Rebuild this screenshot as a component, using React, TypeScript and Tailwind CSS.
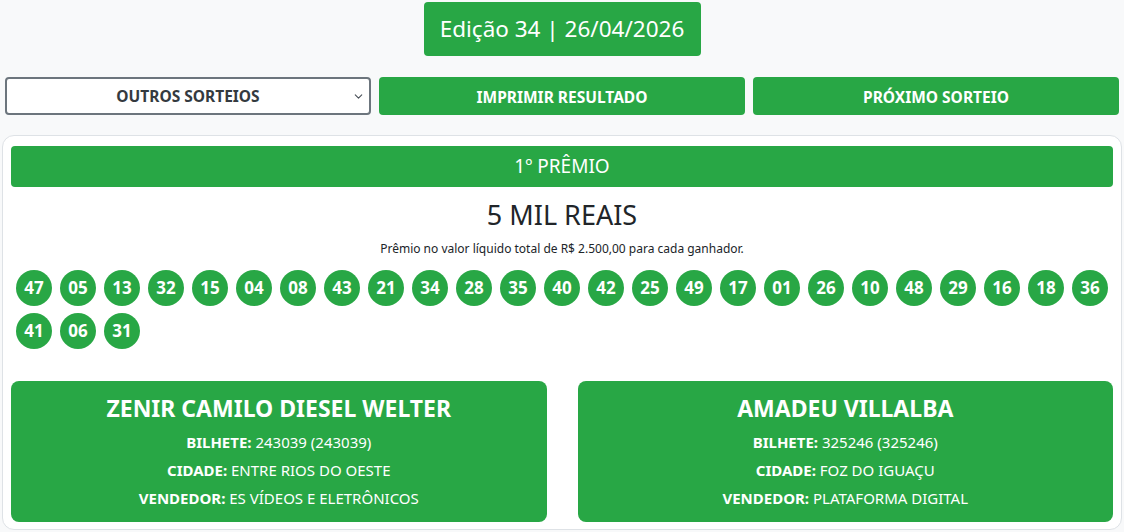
import { ChevronDown } from "lucide-react";

const numbers = [
  "47", "05", "13", "32", "15", "04", "08", "43", "21", "34", "28", "35", "40",
  "42", "25", "49", "17", "01", "26", "10", "48", "29", "16", "18", "36", "41",
  "06", "31",
];

const winners = [
  {
    name: "ZENIR CAMILO DIESEL WELTER",
    bilhete: "243039 (243039)",
    cidade: "ENTRE RIOS DO OESTE",
    vendedor: "ES VÍDEOS E ELETRÔNICOS",
  },
  {
    name: "AMADEU VILLALBA",
    bilhete: "325246 (325246)",
    cidade: "FOZ DO IGUAÇU",
    vendedor: "PLATAFORMA DIGITAL",
  },
];

export default function App() {
  return (
    <div
      className="min-h-[532px] bg-[#f8f9fa] text-[#212529]"
      style={{ fontFamily: '"Noto Sans", "Open Sans", sans-serif' }}
    >
      <div className="flex justify-center pt-[2px]">
        <div className="flex h-[54px] w-[277px] items-center justify-center rounded bg-[#28a745] text-[22.5px] text-white">
          Edição 34 | 26/04/2026
        </div>
      </div>

      <div className="mt-[21px] grid grid-cols-3 gap-2 px-[5px]">
        <div className="relative flex h-[38px] items-center justify-center rounded border-2 border-[#6c757d] bg-white pt-[2px] text-[15.5px] font-bold text-[#343a40]">
          OUTROS SORTEIOS
          <ChevronDown className="absolute right-[4px] top-[11px] h-[13px] w-[13px] text-[#495057]" strokeWidth={2} />
        </div>
        <button className="h-[38px] rounded bg-[#28a745] pt-[3px] text-[15.5px] font-bold text-white">
          IMPRIMIR RESULTADO
        </button>
        <button className="h-[38px] rounded bg-[#28a745] pt-[3px] text-[15.5px] font-bold text-white">
          PRÓXIMO SORTEIO
        </button>
      </div>

      <div className="mx-[2px] mt-[20px] rounded-xl border border-[#dee2e6] bg-white px-2 pb-[7px] pt-[10px]">
        <div className="flex h-[41px] items-center justify-center rounded bg-[#28a745] text-[19px] text-white">
          1º PRÊMIO
        </div>
        <div className="mt-[10px] text-center text-[27px] leading-[36px]">5 MIL REAIS</div>
        <div className="mt-[7px] text-center text-[12px] leading-[18px]">
          Prêmio no valor líquido total de R$ 2.500,00 para cada ganhador.
        </div>
        <div className="mt-[12px] flex flex-wrap gap-x-2 gap-y-[7px] px-[5px]">
          {numbers.map((n) => (
            <div
              key={n}
              className="flex h-9 w-9 items-center justify-center rounded-full bg-[#28a745] text-[17px] font-bold text-white"
            >
              {n}
            </div>
          ))}
        </div>
        <div className="mt-[32px] grid grid-cols-2 gap-[31px]">
          {winners.map((w) => (
            <div key={w.name} className="flex h-[141px] flex-col items-center rounded-lg bg-[#28a745] pt-[11px] text-white">
              <div className="text-[23px] font-bold leading-[32px]">{w.name}</div>
              <div className="mt-[4px] text-[15px] leading-[28px]">
                <span className="font-bold">BILHETE:</span> {w.bilhete}
              </div>
              <div className="text-[15px] leading-[28px]">
                <span className="font-bold">CIDADE:</span> {w.cidade}
              </div>
              <div className="text-[15px] leading-[28px]">
                <span className="font-bold">VENDEDOR:</span> {w.vendedor}
              </div>
            </div>
          ))}
        </div>
      </div>
    </div>
  );
}
